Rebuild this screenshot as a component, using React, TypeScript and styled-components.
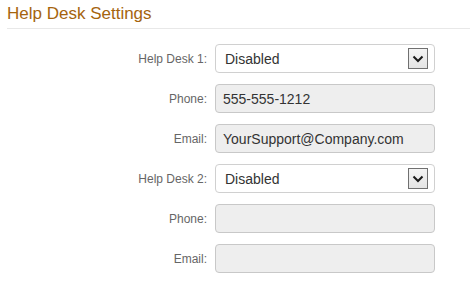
import React, { FC } from 'react'
import styled, { createGlobalStyle } from 'styled-components'

const GlobalStyle = createGlobalStyle`
    body {
        margin: 0;
        background: #fff;
        font-family: "Liberation Sans", Arial, sans-serif;
    }
`;

const Page = styled.div`
    width: 470px;
    height: 289px;
    overflow: hidden;
`;

const Title = styled.h1`
    margin: 4px 0 0 7px;
    padding-bottom: 4px;
    font-size: 17px;
    line-height: 20px;
    font-weight: 400;
    color: #a5640e;
    border-bottom: 1px solid #e8e8e8;
`;

const Form = styled.div`
    display: flex;
    flex-direction: column;
    gap: 11px;
    margin-top: 15px;
`;

const Row = styled.div`
    display: flex;
    align-items: center;
    height: 29px;
`;

const Label = styled.label`
    width: 215px;
    padding-right: 8px;
    box-sizing: border-box;
    text-align: right;
    font-size: 12px;
    color: #666;
`;

const Field = styled.div<{ $select?: boolean }>`
    box-sizing: border-box;
    width: 220px;
    height: 29px;
    display: flex;
    align-items: center;
    justify-content: space-between;
    padding: 0 6px 0 ${p => (p.$select ? '9px' : '7px')};
    border: 1px solid ${p => (p.$select ? '#d0d0d0' : '#c8c8c8')};
    border-radius: 4px;
    background: ${p => (p.$select ? '#fff' : '#eee')};
    font-size: 14px;
    color: #333;
`;

const Arrow = styled.span`
    box-sizing: border-box;
    width: 20px;
    height: 21px;
    display: flex;
    align-items: center;
    justify-content: center;
    border: 1px solid #707070;
    background: linear-gradient(#f4f4f4, #e4e4e4);
`;

const Chevron: FC = () => (
    <svg width="12" height="8" viewBox="0 0 12 8">
        <path d="M1.5 1.5 L6 6 L10.5 1.5" fill="none" stroke="#1a1a1a" strokeWidth="2" />
    </svg>
);

const rows = [
    { label: 'Help Desk 1:', value: 'Disabled', select: true },
    { label: 'Phone:', value: '555-555-1212' },
    { label: 'Email:', value: 'YourSupport@Company.com' },
    { label: 'Help Desk 2:', value: 'Disabled', select: true },
    { label: 'Phone:', value: '' },
    { label: 'Email:', value: '' },
];

const App: FC = () => {
    return (
        <Page>
            <GlobalStyle />
            <Title>Help Desk Settings</Title>
            <Form>
                {rows.map((r, i) => (
                    <Row key={i}>
                        <Label>{r.label}</Label>
                        <Field $select={r.select}>
                            <span>{r.value}</span>
                            {r.select && (
                                <Arrow>
                                    <Chevron />
                                </Arrow>
                            )}
                        </Field>
                    </Row>
                ))}
            </Form>
        </Page>
    )
}

export default App;
